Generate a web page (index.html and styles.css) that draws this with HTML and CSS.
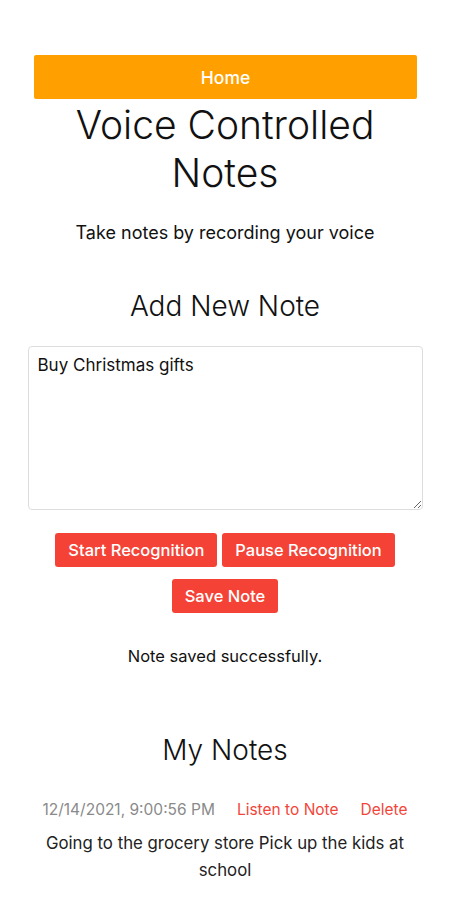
FILE: index.html
```html
<!DOCTYPE html>
<html>
<head>
<meta charset="utf-8">
<link rel="stylesheet" href="styles.css">
</head>
<body>
<div class="page">
  <nav class="nav"><a class="nav-link">Home</a></nav>
  <h1 class="title">Voice Controlled Notes</h1>
  <p class="subtitle">Take notes by recording your voice</p>
  <h2 class="section-title">Add New Note</h2>
  <div class="editor">
    <textarea class="note-input">Buy Christmas gifts</textarea>
  </div>
  <div class="buttons">
    <button class="btn">Start Recognition</button>
    <button class="btn">Pause Recognition</button>
    <button class="btn">Save Note</button>
  </div>
  <p class="status">Note saved successfully.</p>
  <h2 class="section-title notes-title">My Notes</h2>
  <div class="note">
    <div class="note-meta">
      <span class="note-date">12/14/2021, 9:00:56 PM</span>
      <a class="note-action">Listen to Note</a>
      <a class="note-action">Delete</a>
    </div>
    <p class="note-text">Going to the grocery store Pick up the kids at school</p>
  </div>
</div>
</body>
</html>
```
FILE: styles.css
```css
* { box-sizing: border-box; }
html, body { margin: 0; padding: 0; background: #fff; }
body {
  font-family: Inter, "Liberation Sans", Arial, sans-serif;
  color: #111;
}
.page {
  width: 450px;
  padding-top: 55px;
  display: flex;
  flex-direction: column;
  align-items: center;
  text-align: center;
}
.nav {
  width: 383px;
  height: 44px;
  background: #ffa000;
  border-radius: 2px;
  display: flex;
  align-items: center;
  justify-content: center;
  margin-left: 1px;
}
.nav-link {
  color: #fff;
  font-size: 17.5px;
  font-weight: 500;
}
.title {
  font-weight: 300;
  font-size: 39px;
  line-height: 48px;
  margin: 2px 0 0;
  width: 320px;
}
.subtitle {
  font-size: 18px;
  margin: 25px 0 0;
  line-height: 22px;
}
.section-title {
  font-weight: 300;
  font-size: 28px;
  line-height: 34px;
  margin: 45px 0 0;
}
.editor {
  width: 395px;
  margin-top: 23px;
}
.note-input {
  display: block;
  width: 100%;
  height: 164px;
  border: 1px solid #ddd;
  border-radius: 4px;
  padding: 8px 9px;
  font-family: Inter, "Liberation Sans", Arial, sans-serif;
  font-size: 17px;
  color: #111;
  resize: vertical;
}
.buttons {
  width: 370px;
  display: flex;
  flex-wrap: wrap;
  justify-content: center;
  column-gap: 5px;
  row-gap: 12px;
  margin-top: 23px;
}
.btn {
  background: #f44336;
  color: #fff;
  border: none;
  border-radius: 3px;
  height: 34px;
  padding: 0 13px;
  font-family: Inter, "Liberation Sans", Arial, sans-serif;
  font-size: 16.5px;
  font-weight: 500;
}
.status {
  font-size: 16.5px;
  margin: 33px 0 0;
  line-height: 20px;
}
.notes-title {
  margin-top: 67px;
}
.note {
  width: 372px;
  margin-top: 34px;
}
.note-meta {
  display: flex;
  justify-content: center;
  gap: 22px;
  font-size: 15.5px;
  line-height: 18px;
}
.note-date { color: #8a8a8a; }
.note-action { color: #f2453a; }
.note-text {
  font-size: 16.8px;
  line-height: 27px;
  margin: 11px 0 0;
  color: #222;
}
```
